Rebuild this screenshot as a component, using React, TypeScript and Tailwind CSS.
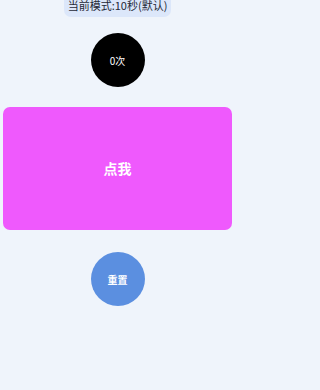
import React, { useState } from 'react';

const App: React.FC = () => {
  const [count, setCount] = useState(0);

  return (
    <div className="min-h-screen w-full bg-[#eff4fb]">
      <div
        className="w-[235px] h-[390px] overflow-hidden flex flex-col items-center px-[3px]"
        style={{ fontFamily: '"Noto Sans CJK SC", "Noto Sans", sans-serif' }}
      >
        {/* Mode pill */}
        <div className="mt-[-9px] w-[107px] h-[26px] shrink-0 rounded-[7px] bg-[#dce7fa] flex items-center justify-center pt-[2px]">
          <span className="text-[11px] leading-none text-[#1f2937] whitespace-nowrap">当前模式:10秒(默认)</span>
        </div>

        {/* Counter */}
        <div className="mt-[16px] w-[54px] h-[54px] shrink-0 rounded-full bg-black flex items-center justify-center">
          <span className="text-[10px] text-white">{count}次</span>
        </div>

        {/* Tap area */}
        <button
          onClick={() => setCount(c => c + 1)}
          className="mt-[20px] w-full h-[123px] shrink-0 rounded-[7px] bg-[#ef59fd] flex items-center justify-center"
        >
          <span className="text-[14px] font-bold text-white">点我</span>
        </button>

        {/* Reset */}
        <button
          onClick={() => setCount(0)}
          className="mt-[22px] w-[54px] h-[54px] shrink-0 rounded-full bg-[#5b8fe0] flex items-center justify-center"
        >
          <span className="text-[10px] font-bold text-white">重置</span>
        </button>
      </div>
    </div>
  );
};

export default App;
